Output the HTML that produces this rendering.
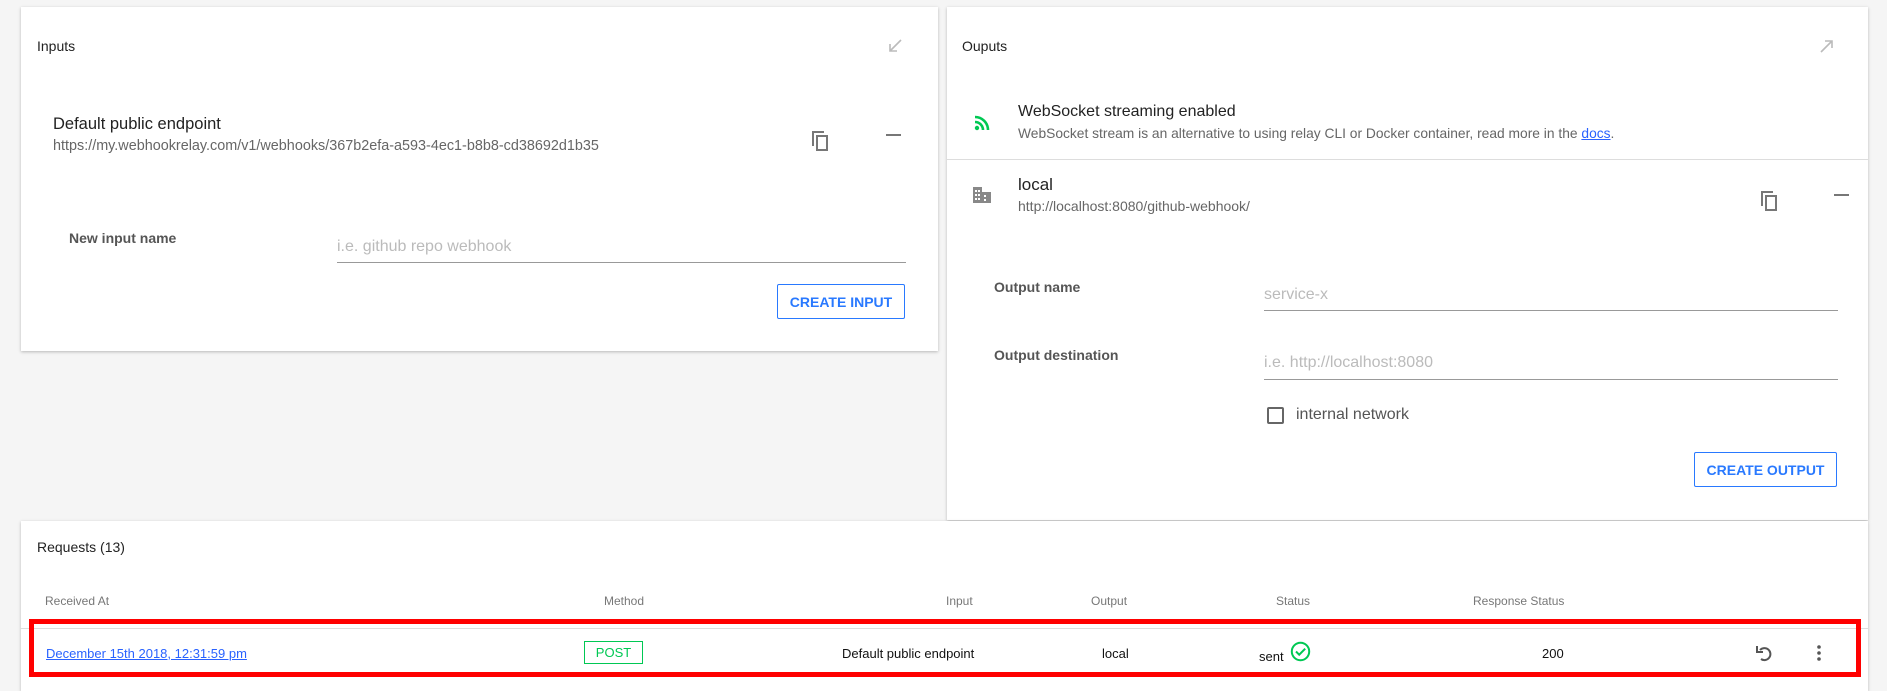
<!DOCTYPE html>
<html><head><meta charset="utf-8"><style>
*{margin:0;padding:0;box-sizing:border-box}
body{width:1887px;height:684px;background:#f5f5f5;font-family:"Liberation Sans",Arial,sans-serif;position:relative;overflow:hidden;color:#222}
.card{position:absolute;background:#fff;box-shadow:0 1px 3px rgba(0,0,0,.25)}
.a{position:absolute;white-space:nowrap}
.lbl{font-size:14px;color:#555;font-weight:bold}
.ph{font-size:16px;color:#bbb}
.ul{position:absolute;height:1px;background:#999}
.btn{position:absolute;border:1px solid #2979ff;color:#2979ff;font-size:14px;font-weight:bold;display:flex;align-items:center;justify-content:center;border-radius:2px}
.h{font-size:12px;color:#777}
.r{font-size:13px;color:#111}
</style></head><body>
<div class="card" style="left:21px;top:7px;width:917px;height:344px"></div>
<div class="card" style="left:947px;top:7px;width:921px;height:513px"></div>
<div class="card" style="left:21px;top:521px;width:1847px;height:170px"></div>

<div class="a" style="left:37px;top:38px;font-size:14px">Inputs</div>
<svg class="a" style="left:886px;top:37px" width="18" height="18" viewBox="0 0 18 18"><path d="M15 3L4 14M4 7v7h7" stroke="#bbb" stroke-width="1.6" fill="none"/></svg>
<div class="a" style="left:53px;top:115px;font-size:16.5px;color:#222">Default public endpoint</div>
<div class="a" style="left:53px;top:138px;font-size:14.4px;color:#666">https://my.webhookrelay.com/v1/webhooks/367b2efa-a593-4ec1-b8b8-cd38692d1b35</div>
<svg class="a" style="left:809px;top:129px" width="22" height="24" viewBox="0 0 22 24"><path d="M4 17V3h11" stroke="#777" stroke-width="2" fill="none"/><rect x="8" y="7" width="10" height="14" stroke="#777" stroke-width="2" fill="none"/></svg>
<div class="a" style="left:886px;top:134px;width:15px;height:2px;background:#777"></div>
<div class="a lbl" style="left:69px;top:230px">New input name</div>
<div class="a ph" style="left:337px;top:238px">i.e. github repo webhook</div>
<div class="ul" style="left:337px;top:262px;width:569px"></div>
<div class="btn" style="left:777px;top:284px;width:128px;height:35px">CREATE INPUT</div>

<div class="a" style="left:962px;top:38px;font-size:14px">Ouputs</div>
<svg class="a" style="left:1818px;top:37px" width="18" height="18" viewBox="0 0 18 18"><path d="M3 15L14 4M7 4h7v7" stroke="#bbb" stroke-width="1.6" fill="none"/></svg>
<svg class="a" style="left:973px;top:114px" width="18" height="18" viewBox="0 0 18 18"><circle cx="4" cy="14" r="2.2" fill="#00c853"/><path d="M2 8a8 8 0 0 1 8 8M2 3a13 13 0 0 1 13 13" stroke="#00c853" stroke-width="2.6" fill="none"/></svg>
<div class="a" style="left:1018px;top:103px;font-size:16px">WebSocket streaming enabled</div>
<div class="a" style="left:1018px;top:126px;font-size:13.8px;color:#666">WebSocket stream is an alternative to using relay CLI or Docker container, read more in the <span style="color:#2962ff;text-decoration:underline">docs</span>.</div>
<div class="a" style="left:947px;top:159px;width:921px;height:1px;background:#ddd"></div>
<svg class="a" style="left:972px;top:185px" width="20" height="20" viewBox="0 0 20 20" fill="#888"><path d="M1 2h9v16H1zM10 7h9v11h-9z"/><g fill="#fff"><rect x="3" y="5" width="2" height="2"/><rect x="6" y="5" width="2" height="2"/><rect x="3" y="9" width="2" height="2"/><rect x="6" y="9" width="2" height="2"/><rect x="3" y="13" width="2" height="2"/><rect x="6" y="13" width="2" height="2"/><rect x="12" y="10" width="2" height="2"/><rect x="12" y="14" width="2" height="2"/></g></svg>
<div class="a" style="left:1018px;top:175px;font-size:17px">local</div>
<div class="a" style="left:1018px;top:198px;font-size:14px;color:#666">http://localhost:8080/github-webhook/</div>
<svg class="a" style="left:1758px;top:189px" width="22" height="24" viewBox="0 0 22 24"><path d="M4 17V3h11" stroke="#777" stroke-width="2" fill="none"/><rect x="8" y="7" width="10" height="14" stroke="#777" stroke-width="2" fill="none"/></svg>
<div class="a" style="left:1834px;top:194px;width:15px;height:2px;background:#777"></div>
<div class="a lbl" style="left:994px;top:279px">Output name</div>
<div class="a ph" style="left:1264px;top:286px">service-x</div>
<div class="ul" style="left:1264px;top:310px;width:574px"></div>
<div class="a lbl" style="left:994px;top:347px">Output destination</div>
<div class="a ph" style="left:1264px;top:354px">i.e. http://localhost:8080</div>
<div class="ul" style="left:1264px;top:379px;width:574px"></div>
<div class="a" style="left:1267px;top:407px;width:17px;height:17px;border:2px solid #666;border-radius:2px"></div>
<div class="a" style="left:1296px;top:406px;font-size:16px;color:#555">internal network</div>
<div class="btn" style="left:1694px;top:452px;width:143px;height:35px">CREATE OUTPUT</div>

<div class="a" style="left:37px;top:539px;font-size:14px">Requests (13)</div>
<div class="a h" style="left:45px;top:594px">Received At</div>
<div class="a h" style="left:604px;top:594px">Method</div>
<div class="a h" style="left:946px;top:594px">Input</div>
<div class="a h" style="left:1091px;top:594px">Output</div>
<div class="a h" style="left:1276px;top:594px">Status</div>
<div class="a h" style="left:1473px;top:594px">Response Status</div>
<div class="a" style="left:21px;top:628px;width:1847px;height:1px;background:#ddd"></div>
<div class="a" style="left:29px;top:619px;width:1832px;height:58px;border:5px solid #f00"></div>
<div class="a r" style="left:46px;top:646px;color:#2962ff;text-decoration:underline">December 15th 2018, 12:31:59 pm</div>
<div class="a" style="left:584px;top:641px;width:59px;height:23px;border:1px solid #00c853;color:#00c853;font-size:13px;display:flex;align-items:center;justify-content:center">POST</div>
<div class="a r" style="left:842px;top:646px">Default public endpoint</div>
<div class="a r" style="left:1102px;top:646px">local</div>
<div class="a r" style="left:1259px;top:649px">sent</div>
<svg class="a" style="left:1290px;top:641px" width="21" height="21" viewBox="0 0 21 21"><circle cx="10.5" cy="10.5" r="8.7" stroke="#00c853" stroke-width="2" fill="none"/><path d="M6 10.5l3.2 3.2 6-6" stroke="#00c853" stroke-width="2" fill="none"/></svg>
<div class="a r" style="left:1542px;top:646px">200</div>
<svg class="a" style="left:1754px;top:642px" width="20" height="22" viewBox="0 0 20 22"><path d="M6 8a6 6 0 1 1 1 9" stroke="#555" stroke-width="2" fill="none"/><path d="M3 4v6h6" stroke="#555" stroke-width="2" fill="none"/></svg>
<svg class="a" style="left:1816px;top:644px" width="6" height="18" viewBox="0 0 6 18" fill="#555"><circle cx="3" cy="3" r="1.8"/><circle cx="3" cy="9" r="1.8"/><circle cx="3" cy="15" r="1.8"/></svg>
</body></html>
